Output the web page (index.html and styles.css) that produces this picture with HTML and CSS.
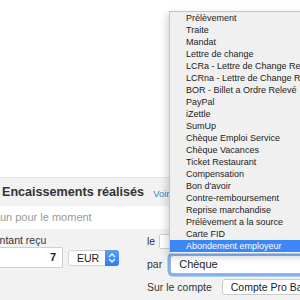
FILE: index.html
```html
<!DOCTYPE html>
<html lang="fr">
<head>
<meta charset="utf-8">
<title>Encaissements</title>
<link rel="stylesheet" href="styles.css">
</head>
<body>
<div class="top"></div>
<div class="panel">
  <div class="panel-head">
    <h2 class="title">Encaissements réalisés</h2>
    <a class="link">Voir</a>
  </div>
  <div class="empty">Aucun pour le moment</div>
  <div class="form">
    <div class="col-left">
      <div class="label">Montant reçu</div>
      <div class="amount-row">
        <div class="amount">7</div>
        <div class="currency">
          <span class="currency-text">EUR</span>
          <span class="stepper">
            <svg width="14" height="16" viewBox="0 0 14 16"><path d="M4.5 6.5 L7 4 L9.5 6.5 M4.5 9.5 L7 12 L9.5 9.5" fill="none" stroke="#fff" stroke-width="1.3" stroke-linecap="round" stroke-linejoin="round"/></svg>
          </span>
        </div>
      </div>
    </div>
    <div class="col-right">
      <div class="row row-date">
        <span class="label">le</span>
        <div class="date-box"></div>
      </div>
      <div class="row row-par">
        <span class="label">par</span>
        <div class="select-focus">Chèque</div>
      </div>
      <div class="row row-compte">
        <span class="label">Sur le compte</span>
        <div class="button">Compte Pro Banque</div>
      </div>
    </div>
  </div>
</div>
<ul class="menu">
  <li>Prélèvement</li>
  <li>Traite</li>
  <li>Mandat</li>
  <li>Lettre de change</li>
  <li>LCRa - Lettre de Change Relevé</li>
  <li>LCRna - Lettre de Change Relevé non acceptée</li>
  <li>BOR - Billet a Ordre Relevé</li>
  <li>PayPal</li>
  <li>iZettle</li>
  <li>SumUp</li>
  <li>Chèque Emploi Service</li>
  <li>Chèque Vacances</li>
  <li>Ticket Restaurant</li>
  <li>Compensation</li>
  <li>Bon d'avoir</li>
  <li>Contre-remboursement</li>
  <li>Reprise marchandise</li>
  <li>Prélèvement a la source</li>
  <li>Carte FID</li>
  <li class="active">Abondement employeur</li>
</ul>
</body>
</html>
```
FILE: styles.css
```css
html, body {
  margin: 0;
  padding: 0;
  width: 300px;
  height: 300px;
  overflow: hidden;
  background: #f2f2f2;
  font-family: "Liberation Sans", Arial, sans-serif;
  color: #333;
}
.top {
  height: 177px;
  background: #fff;
  border-bottom: 1px solid #e4e4e4;
}
.panel {
  margin-left: -22px;
  width: 360px;
  background: #f2f2f2;
}
.panel-head {
  height: 28px;
  display: flex;
  align-items: center;
  gap: 9px;
  padding-left: 24px;
}
.title {
  margin: 0;
  font-size: 12.6px;
  font-weight: bold;
  color: #333;
}
.link {
  font-size: 9.5px;
  color: #2f8ad0;
  padding-top: 2px;
}
.empty {
  height: 23px;
  line-height: 23px;
  background: #fff;
  padding-left: 3px;
  font-size: 11px;
  color: #9a9a9a;
}
.form {
  display: flex;
  padding-left: 7px;
  padding-top: 4px;
  height: 67px;
}
.label {
  font-size: 10.5px;
  color: #333;
  white-space: nowrap;
}
.col-left .label {
  height: 14px;
  line-height: 14px;
}
.amount-row {
  display: flex;
  align-items: center;
  gap: 5px;
}
.amount {
  width: 70px;
  height: 19px;
  background: #fff;
  border: 1px solid #cfcfcf;
  border-radius: 2px;
  text-align: right;
  padding-right: 6px;
  font-size: 11px;
  font-weight: bold;
  line-height: 19px;
  color: #222;
}
.currency {
  display: flex;
  align-items: center;
  width: 51px;
  height: 16px;
  background: #fff;
  border: 1px solid #d2d2d2;
  border-radius: 3px;
  box-sizing: border-box;
}
.currency-text {
  flex: 1;
  padding-left: 8px;
  font-size: 10.5px;
  color: #222;
}
.stepper {
  display: flex;
  width: 14px;
  height: 16px;
  margin-right: -1px;
  background: linear-gradient(#5a9df8, #2d7ef3);
  border-radius: 0 3px 3px 0;
}
.col-right {
  margin-left: 28px;
  display: flex;
  flex-direction: column;
}
.row {
  display: flex;
  align-items: center;
}
.row-date {
  height: 16px;
  gap: 4px;
}
.date-box {
  width: 60px;
  height: 13px;
  background: #fff;
  border: 1px solid #d0d0d0;
  border-radius: 2px;
}
.row-par {
  margin-top: 5px;
  height: 20px;
  gap: 8px;
}
.select-focus {
  width: 140px;
  height: 17px;
  line-height: 17px;
  background: #fff;
  border: 1px solid #9fb6d6;
  border-radius: 3px;
  padding-left: 8px;
  font-size: 11px;
  color: #222;
  box-shadow: 0 0 0 2.5px #7fb0f3;
}
.row-compte {
  margin-top: 4px;
  height: 17px;
  gap: 10px;
}
.button {
  height: 14px;
  line-height: 14px;
  background: #fff;
  border: 1px solid #cbcbcb;
  border-radius: 3px;
  padding-left: 8px;
  font-size: 10.5px;
  color: #222;
  white-space: nowrap;
}
.menu {
  position: absolute;
  left: 169px;
  top: 11px;
  width: 170px;
  margin: 0;
  padding: 0 0 1px 0;
  list-style: none;
  background: #f0f0f0;
  border: 1px solid #c4c4c4;
  box-shadow: -2px 3px 8px rgba(0, 0, 0, 0.18);
}
.menu li {
  height: 12px;
  line-height: 12px;
  padding-left: 16px;
  font-size: 9px;
  color: #1c1c1c;
  white-space: nowrap;
}
.menu li.active {
  background: #3c86f5;
  color: #fff;
}
```
